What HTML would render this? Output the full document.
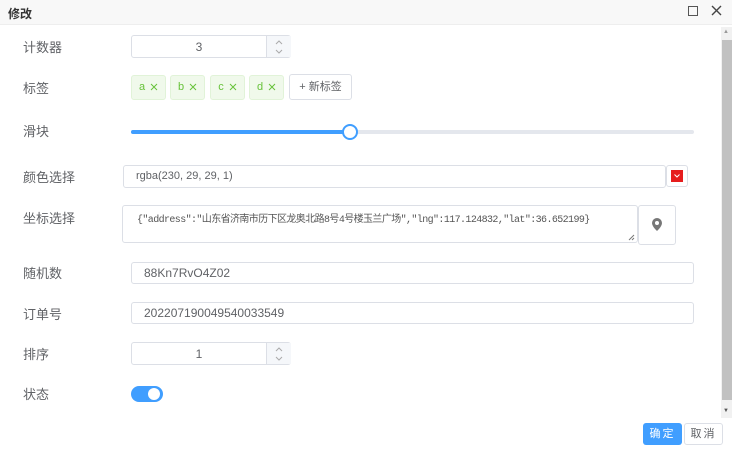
<!DOCTYPE html>
<html><head><meta charset="utf-8"><style>
*{box-sizing:border-box;margin:0;padding:0}
body{width:732px;height:455px;background:#fff;font-family:"Liberation Sans","Noto Sans CJK SC",sans-serif;font-size:12px;color:#606266;position:relative;overflow:hidden}
.a{position:absolute}
.hdr{left:0;top:0;width:732px;height:25px;background:#f8f8f8;border-bottom:1px solid #eee}
.lbl{left:23px;font-size:13px;color:#606266}
.box{border:1px solid #dcdfe6;border-radius:3px;background:#fff}
.tag{top:75px;height:25px;width:35px;background:#f0f9eb;border:1px solid #e1f3d8;border-radius:3px;color:#67c23a;font-size:11px;line-height:23px;text-align:center}
.tag svg{vertical-align:-1px;margin-left:5px}
.inp{padding-left:12px;line-height:20px;font-size:12px;color:#606266}
.sp{left:134px;top:0;width:25px;height:21px;background:#f5f7fa;border-left:1px solid #dcdfe6}
</style></head><body>
<div class="a hdr"><span class="a" style="left:8px;top:5px;font-size:12px;color:#333;font-weight:bold">修改</span>
<div class="a" style="left:688px;top:6px;width:10px;height:10px;border:1px solid #555"></div>
<svg class="a" style="left:711px;top:5px" width="11" height="11" viewBox="0 0 11 11"><path d="M1 1L10 10M10 1L1 10" stroke="#444" stroke-width="1.4"/></svg></div>

<div class="a lbl" style="top:37px">计数器</div>
<div class="a box" style="left:131px;top:35px;width:160px;height:23px"><span class="a" style="left:0;width:134px;text-align:center;top:4px">3</span>
<div class="a sp"><svg class="a" style="left:8px;top:2px" width="8" height="17" viewBox="0 0 8 17"><path d="M1 6L4 3L7 6M1 12L4 15L7 12" stroke="#aaa" fill="none"/></svg></div></div>

<div class="a lbl" style="top:78px">标签</div>
<div class="a tag" style="left:131px">a<svg width="8" height="8" viewBox="0 0 8 8"><path d="M1 1L7 7M7 1L1 7" stroke="#67c23a"/></svg></div>
<div class="a tag" style="left:170px">b<svg width="8" height="8" viewBox="0 0 8 8"><path d="M1 1L7 7M7 1L1 7" stroke="#67c23a"/></svg></div>
<div class="a tag" style="left:210px">c<svg width="8" height="8" viewBox="0 0 8 8"><path d="M1 1L7 7M7 1L1 7" stroke="#67c23a"/></svg></div>
<div class="a tag" style="left:249px">d<svg width="8" height="8" viewBox="0 0 8 8"><path d="M1 1L7 7M7 1L1 7" stroke="#67c23a"/></svg></div>
<div class="a box" style="left:289px;top:74px;width:63px;height:26px;text-align:center;line-height:24px;font-size:11px">+ 新标签</div>

<div class="a lbl" style="top:121px">滑块</div>
<div class="a" style="left:131px;top:130px;width:563px;height:4px;background:#e4e7ed;border-radius:2px"></div>
<div class="a" style="left:131px;top:130px;width:219px;height:4px;background:#409eff;border-radius:2px"></div>
<div class="a" style="left:342px;top:124px;width:16px;height:16px;border:2px solid #409eff;border-radius:50%;background:#fff"></div>

<div class="a lbl" style="top:167px">颜色选择</div>
<div class="a box inp" style="left:123px;top:165px;width:543px;height:23px;line-height:21px;font-size:11px">rgba(230, 29, 29, 1)</div>
<div class="a box" style="left:666px;top:165px;width:22px;height:22px;padding:4px"><div style="width:12px;height:12px;background:#e61d1d;position:relative"><svg class="a" style="left:3px;top:4px" width="6" height="4" viewBox="0 0 6 4"><path d="M0.5 0.5L3 3L5.5 0.5" stroke="#fff" fill="none"/></svg></div></div>

<div class="a lbl" style="top:208px">坐标选择</div>
<div class="a box" style="left:122px;top:205px;width:516px;height:38px;padding:4px 0 0 14px;font-size:10px;font-family:'Liberation Mono','Noto Sans CJK SC',monospace;letter-spacing:-0.6px;white-space:nowrap;color:#555">{"address":"山东省济南市历下区龙奥北路8号4号楼玉兰广场","lng":117.124832,"lat":36.652199}</div>
<svg class="a" style="left:628px;top:234px" width="7" height="7" viewBox="0 0 7 7"><path d="M1 6L6 1M4 6L6 4" stroke="#777"/></svg>
<div class="a box" style="left:638px;top:205px;width:38px;height:40px"><svg class="a" style="left:12px;top:11px" width="12" height="15" viewBox="0 0 12 15"><path d="M6 1a5 5 0 0 0-5 5c0 3.5 5 8 5 8s5-4.5 5-8a5 5 0 0 0-5-5z" fill="#777"/><circle cx="6" cy="6" r="2" fill="#fff"/></svg></div>

<div class="a lbl" style="top:263px">随机数</div>
<div class="a box inp" style="left:131px;top:262px;width:563px;height:22px">88Kn7RvO4Z02</div>
<div class="a lbl" style="top:304px">订单号</div>
<div class="a box inp" style="left:131px;top:302px;width:563px;height:22px">202207190049540033549</div>

<div class="a lbl" style="top:344px">排序</div>
<div class="a box" style="left:131px;top:342px;width:160px;height:23px"><span class="a" style="left:0;width:134px;text-align:center;top:4px">1</span>
<div class="a sp"><svg class="a" style="left:8px;top:2px" width="8" height="17" viewBox="0 0 8 17"><path d="M1 6L4 3L7 6M1 12L4 15L7 12" stroke="#aaa" fill="none"/></svg></div></div>

<div class="a lbl" style="top:384px">状态</div>
<div class="a" style="left:131px;top:386px;width:32px;height:16px;background:#409eff;border-radius:8px"><div class="a" style="left:17px;top:2px;width:12px;height:12px;background:#fff;border-radius:50%"></div></div>

<div class="a" style="left:721px;top:27px;width:11px;height:391px;background:#f1f1f1"></div>
<div class="a" style="left:722px;top:40px;width:10px;height:360px;background:#c1c1c1"></div>
<span class="a" style="left:723px;top:29px;font-size:6px;color:#999">▲</span>
<span class="a" style="left:723px;top:408px;font-size:6px;color:#555">▼</span>

<div class="a" style="left:643px;top:423px;width:39px;height:22px;background:#409eff;border-radius:3px;color:#fff;text-align:center;line-height:22px;font-size:11px;letter-spacing:2px">确定</div>
<div class="a box" style="left:684px;top:423px;width:39px;height:22px;text-align:center;line-height:20px;font-size:11px;letter-spacing:2px">取消</div>
</body></html>
